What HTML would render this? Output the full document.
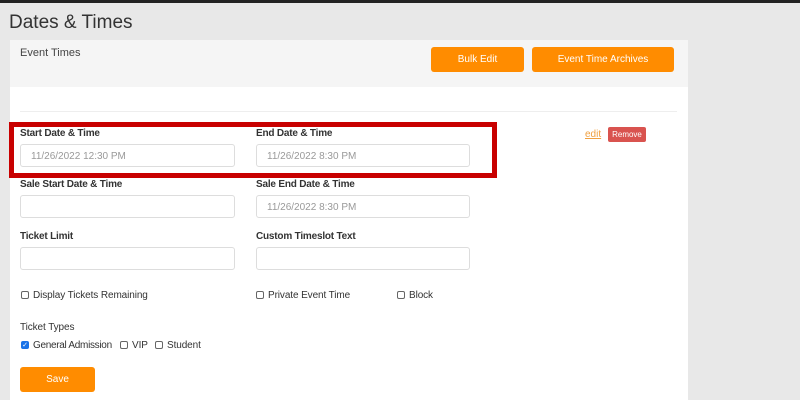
<!DOCTYPE html>
<html><head><style>
*{box-sizing:border-box;margin:0;padding:0}
body{width:800px;height:400px;overflow:hidden;background:#e8e8e8;font-family:"Liberation Sans",sans-serif;position:relative;color:#333}
.a{position:absolute}
.lbl{font-size:10px;font-weight:bold;color:#333;letter-spacing:-0.2px}
.in{position:absolute;height:23px;background:#fff;border:1px solid #ddd;border-radius:3px;font-size:10px;color:#999;padding:6px 0 0 10px}
.btn{position:absolute;background:#ff8c00;color:#fff;font-size:10px;text-align:center;border-radius:3px}
.cb{position:absolute;width:8px;height:8px;border:1px solid #666;border-radius:2px;background:#fff}
.t{position:absolute;font-size:10px;color:#333;letter-spacing:-0.1px}
</style></head><body>
<div class="a" style="left:0;top:0;width:800px;height:3px;background:#222"></div>
<div class="a" style="left:9px;top:12px;font-size:19px;color:#333">Dates &amp; Times</div>
<div class="a" style="left:10px;top:40px;width:678px;height:360px;background:#fff"></div>
<div class="a" style="left:10px;top:40px;width:678px;height:47px;background:#f5f5f5"></div>
<div class="a" style="left:20px;top:47px;font-size:11px;color:#444">Event Times</div>
<div class="btn" style="left:431px;top:47px;width:93px;height:25px;line-height:26px">Bulk Edit</div>
<div class="btn" style="left:532px;top:47px;width:142px;height:25px;line-height:26px">Event Time Archives</div>
<div class="a" style="left:20px;top:111px;width:657px;height:1px;background:#eee"></div>
<div class="a" style="left:9px;top:122px;width:488px;height:56px;border:5px solid #c80000"></div>
<div class="a lbl" style="left:20px;top:128px">Start Date &amp; Time</div>
<div class="a lbl" style="left:256px;top:128px">End Date &amp; Time</div>
<div class="in" style="left:20px;top:144px;width:215px">11/26/2022 12:30 PM</div>
<div class="in" style="left:256px;top:144px;width:214px">11/26/2022 8:30 PM</div>
<div class="a" style="left:585px;top:129px;font-size:10px;color:#f0a040;text-decoration:underline">edit</div>
<div class="a" style="left:608px;top:127px;width:38px;height:15px;background:#d9534f;color:#fff;font-size:8px;line-height:15px;text-align:center;border-radius:2px">Remove</div>
<div class="a lbl" style="left:20px;top:179px">Sale Start Date &amp; Time</div>
<div class="a lbl" style="left:256px;top:179px">Sale End Date &amp; Time</div>
<div class="in" style="left:20px;top:195px;width:215px"></div>
<div class="in" style="left:256px;top:195px;width:214px">11/26/2022 8:30 PM</div>
<div class="a lbl" style="left:20px;top:231px">Ticket Limit</div>
<div class="a lbl" style="left:256px;top:231px">Custom Timeslot Text</div>
<div class="in" style="left:20px;top:247px;width:215px"></div>
<div class="in" style="left:256px;top:247px;width:214px"></div>
<div class="cb" style="left:21px;top:291px"></div><div class="t" style="left:33px;top:290px">Display Tickets Remaining</div>
<div class="cb" style="left:256px;top:291px"></div><div class="t" style="left:268px;top:290px">Private Event Time</div>
<div class="cb" style="left:397px;top:291px"></div><div class="t" style="left:409px;top:290px">Block</div>
<div class="t" style="left:20px;top:322px">Ticket Types</div>
<div class="cb" style="left:21px;top:341px;background:#1a73e8;border-color:#1a73e8;color:#fff;font-size:7px;line-height:7px;text-align:center">✓</div>
<div class="t" style="left:33px;top:340px;letter-spacing:-0.3px">General Admission</div>
<div class="cb" style="left:120px;top:341px"></div><div class="t" style="left:132px;top:340px">VIP</div>
<div class="cb" style="left:155px;top:341px"></div><div class="t" style="left:167px;top:340px">Student</div>
<div class="btn" style="left:20px;top:367px;width:75px;height:25px;line-height:25px">Save</div>
</body></html>
